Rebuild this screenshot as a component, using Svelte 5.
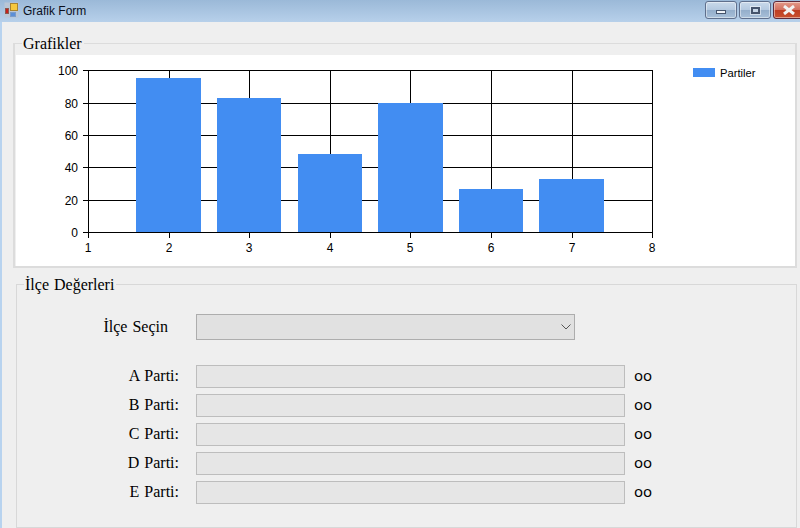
<script>
  const xs = [88, 169, 249, 330, 410, 491, 572, 652];
  const ys = [70, 103, 135, 167, 200, 232];
  const yLabels = [100, 80, 60, 40, 20, 0];
  const bars = [
    { x: 136, w: 65, top: 78 },
    { x: 217, w: 64, top: 98 },
    { x: 298, w: 64, top: 154 },
    { x: 378, w: 65, top: 103 },
    { x: 459, w: 64, top: 189 },
    { x: 539, w: 65, top: 179 }
  ];
  const rows = ['A', 'B', 'C', 'D', 'E'];
</script>

<div class="window">
  <header class="titlebar">
    <svg class="appicon" width="18" height="18" viewBox="0 0 18 18">
      <rect x="0.5" y="0.5" width="14" height="15" fill="#b9c6d6" />
      <rect x="1.5" y="6.5" width="3" height="5" fill="#c8201c" stroke="#8a5a50" />
      <rect x="6.5" y="1.5" width="7" height="7" fill="#f6c83c" stroke="#a88430" />
      <rect x="6.5" y="10.5" width="5" height="4" fill="#5b8fd8" stroke="#7a9cc8" />
    </svg>
    <span class="title">Grafik Form</span>
    <div class="controls">
      <div class="ctl"><span class="min"></span></div>
      <div class="ctl"><span class="max"></span></div>
      <div class="ctl close">
        <svg width="14" height="10" viewBox="0 0 14 10">
          <path d="M2 1 L12 9 M12 1 L2 9" stroke="#f2f2f2" stroke-width="3" />
        </svg>
      </div>
    </div>
  </header>

  <main class="client">
    <section class="group chartgroup">
      <h2 class="legend-title">Grafikler</h2>
      <div class="chartbox">
        <svg class="chart" width="778" height="211" viewBox="16 55 778 211">
          {#each xs as x}
            <line x1={x + 0.5} x2={x + 0.5} y1="70" y2="238" stroke="#000" />
          {/each}
          {#each ys as y}
            <line x1="83" x2="653" y1={y + 0.5} y2={y + 0.5} stroke="#000" />
          {/each}
          {#each bars as b}
            <rect x={b.x} y={b.top} width={b.w} height={232 - b.top} fill="#428df2" />
          {/each}
          <line x1="83" x2="653" y1="232.5" y2="232.5" stroke="#000" />
          {#each ys as y, i}
            <text x="78" y={y + 4.5} text-anchor="end" class="tick">{yLabels[i]}</text>
          {/each}
          {#each xs as x, i}
            <text x={x} y="252" text-anchor="middle" class="tick">{i + 1}</text>
          {/each}
          <rect x="693" y="68" width="22" height="9" fill="#428df2" />
          <text x="720" y="77" class="legend">Partiler</text>
        </svg>
      </div>
    </section>

    <section class="group formgroup">
      <h2 class="legend-title second">İlçe Değerleri</h2>
      <div class="selectrow">
        <span class="lbl sel">İlçe Seçin</span>
        <div class="combo">
          <svg width="10" height="6" viewBox="0 0 10 6">
            <path d="M0.5 0.5 L5 5 L9.5 0.5" fill="none" stroke="#555" />
          </svg>
        </div>
      </div>
      <div class="rows">
        {#each rows as r}
          <div class="row">
            <span class="lbl">{r} Parti:</span>
            <div class="field"></div>
            <span class="val">oo</span>
          </div>
        {/each}
      </div>
    </section>
  </main>
</div>

<style>
  :global(body) {
    margin: 0;
    background: #f0f0f0;
  }
  .window {
    width: 800px;
    height: 528px;
    overflow: hidden;
    background: #f0f0f0;
    display: flex;
    flex-direction: column;
  }
  .titlebar {
    height: 22px;
    flex: none;
    display: flex;
    align-items: center;
    background: linear-gradient(#9bb9d8, #b7d0ea);
  }
  .appicon {
    margin-left: 4px;
    flex: none;
  }
  .title {
    margin-left: 1px;
    font: 12px "Liberation Sans", Arial, sans-serif;
    color: #0a0f1c;
  }
  .controls {
    margin-left: auto;
    display: flex;
    gap: 2px;
    align-self: flex-start;
    margin-top: 1px;
    margin-right: -3px;
  }
  .ctl {
    width: 30px;
    height: 16px;
    border: 1px solid #5f6f8c;
    border-radius: 3px;
    background: linear-gradient(#c9d9ea 0%, #b4c9e0 48%, #94aecb 52%, #a8c0d9 100%);
    display: flex;
    align-items: center;
    justify-content: center;
    box-shadow: inset 0 0 0 1px rgba(255, 255, 255, 0.45);
  }
  .ctl.close {
    width: 20px;
    border-color: #5e2a3a;
    background: linear-gradient(#e39a8a 0%, #d2705f 48%, #bf3d22 52%, #c9502f 100%);
    justify-content: flex-start;
    padding-left: 8px;
  }
  .min {
    width: 8px;
    height: 2px;
    margin-top: 3px;
    border: 1px solid #45546c;
    background: #f0f3f7;
  }
  .max {
    width: 5px;
    height: 3px;
    border: 2px solid #45546c;
    background: #c6d5e6;
    outline: 1px solid rgba(255, 255, 255, 0.5);
  }
  .client {
    flex: 1;
    margin-left: 2px;
    background: #efefef;
    display: flex;
    flex-direction: column;
    box-shadow: -2px 0 0 #b8d3ef;
  }
  .group {
    position: relative;
    box-sizing: border-box;
    border: 1px solid #dcdcdc;
  }
  .chartgroup {
    margin: 21px 3px 0 11px;
    height: 225px;
    border-width: 1px 2px 2px 2px;
    padding: 11px 0 0 1px;
  }
  .legend-title {
    position: absolute;
    left: 7px;
    top: -9px;
    margin: 0;
    padding: 0 2px 0 1px;
    background: #efefef;
    font: 400 16px/18px "Liberation Serif", "Times New Roman", serif;
    word-spacing: 1px;
    color: #000;
  }
  .chartbox {
    background: #fff;
    height: 211px;
  }
  .chart {
    display: block;
  }
  .tick {
    font: 12px "Liberation Sans", Arial, sans-serif;
    fill: #000;
  }
  .legend {
    font: 11.2px "Liberation Sans", Arial, sans-serif;
    fill: #000;
  }
  .formgroup {
    margin: 16px 3px 0 14px;
    flex: 1;
    border-color: #d8d8d8;
  }
  .selectrow {
    display: flex;
    align-items: center;
    margin-top: 29px;
    height: 26px;
  }
  .lbl {
    font: 16px/22px "Liberation Serif", "Times New Roman", serif;
    word-spacing: 1px;
    color: #000;
    padding-right: 17px;
    text-align: right;
    box-sizing: border-box;
    flex: none;
  }
  .lbl.sel {
    width: 151px;
    padding-right: 0;
    margin-right: 28px;
  }
  .combo {
    width: 379px;
    height: 26px;
    box-sizing: border-box;
    border: 1px solid #adadad;
    background: #e1e1e1;
    display: flex;
    align-items: center;
    justify-content: flex-end;
    padding-right: 3px;
  }
  .rows {
    margin-top: 25px;
    display: flex;
    flex-direction: column;
    gap: 6px;
  }
  .row {
    display: flex;
    align-items: center;
    height: 23px;
  }
  .field {
    width: 429px;
    height: 23px;
    box-sizing: border-box;
    border: 1px solid #bdbdbd;
    background: #e6e6e6;
  }
  .val {
    margin-left: 9px;
    margin-bottom: 2px;
    font: 15px/19px "Noto Sans", "DejaVu Sans", sans-serif;
    color: #000;
  }
  .row .lbl {
    width: 179px;
    margin-bottom: 2px;
  }
</style>
